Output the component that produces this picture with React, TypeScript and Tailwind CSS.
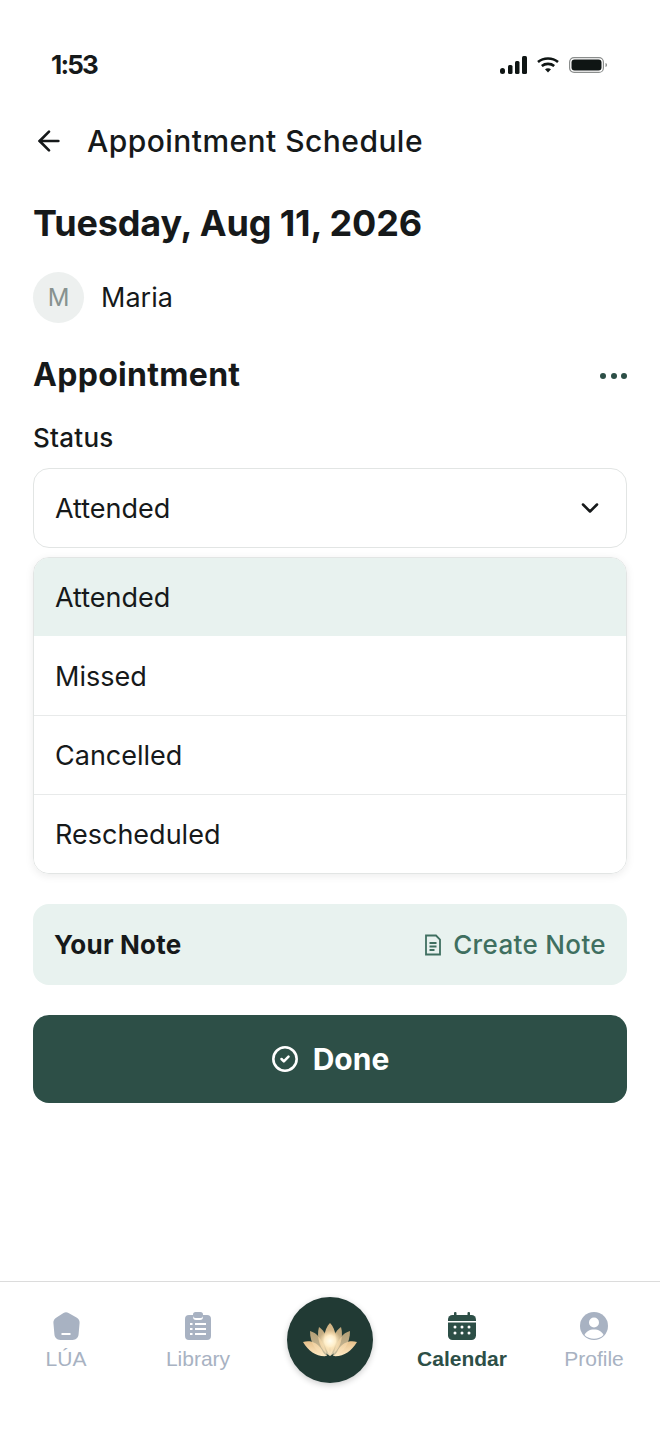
import React from 'react';
import { ArrowLeft, ChevronDown, CircleCheck } from 'lucide-react';

const font = { fontFamily: 'Inter, sans-serif' };

const options = ['Attended', 'Missed', 'Cancelled', 'Rescheduled'];

const StatusIcons = () => (
  <div className="flex items-start">
    <svg width="27" height="18" viewBox="0 0 27 18" fill="#0f1514">
      <rect x="0" y="12" width="5" height="6" rx="2.500" />
      <rect x="8" y="9" width="4.500" height="9" rx="1.500" />
      <rect x="15" y="5" width="4.500" height="13" rx="1.500" />
      <rect x="22" y="0" width="5" height="18" rx="1.500" />
    </svg>
    <svg width="22" height="16" viewBox="0 0 22 16" fill="none" stroke="#0f1514" strokeWidth="2.600" className="ml-[10px] mt-[1px]">
      <path d="M1 5C6.500 .3 15.500 .3 21 5" />
      <path d="M4.800 9c3.500-2.800 8.900-2.800 12.400 0" />
      <path d="M8 12.200l3 3.300 3-3.300c-1.800-1.200-4.200-1.200-6 0z" fill="#0f1514" stroke="none" />
    </svg>
    <svg width="39" height="16" viewBox="0 0 39 16" fill="none" className="ml-[10px] mt-[1px]">
      <rect x=".6" y=".6" width="33.800" height="14.800" rx="4.500" stroke="#8a8d8c" strokeWidth="1.200" />
      <rect x="2.500" y="2.500" width="30" height="11" rx="3" fill="#0f1514" />
      <path d="M36.500 6c1 .4 1.500 1 1.500 2s-.5 1.600-1.500 2z" fill="#8a8d8c" />
    </svg>
  </div>
);

const Lotus = () => (
  <svg width="56" height="34" viewBox="0 0 56 34">
    <defs>
      <linearGradient id="petal" x1="0" y1="0" x2="0" y2="1">
        <stop offset="0" stopColor="#e6c08a" />
        <stop offset="1" stopColor="#ffeac4" />
      </linearGradient>
      <radialGradient id="glow">
        <stop offset="0" stopColor="#fffdf0" />
        <stop offset=".5" stopColor="#ffeec9" />
        <stop offset="1" stopColor="#f8d8a2" stopOpacity="0" />
      </radialGradient>
    </defs>
    <path d="M1 19c7-2 14 0 19 8 1 3 3 5 5 6-10 1-18-4-24-14z" fill="url(#petal)" />
    <path d="M55 19c-7-2-14 0-19 8-1 3-3 5-5 6 10 1 18-4 24-14z" fill="url(#petal)" />
    <path d="M8 8c7 2 13 8 17 25C14 30 8 20 8 8z" fill="url(#petal)" opacity=".75" />
    <path d="M48 8c-7 2-13 8-17 25 11-3 17-13 17-25z" fill="url(#petal)" opacity=".75" />
    <path d="M17 4c6 4 10 12 11 29C18 28 14 14 17 4z" fill="url(#petal)" opacity=".8" />
    <path d="M39 4c-6 4-10 12-11 29 10-5 14-19 11-29z" fill="url(#petal)" opacity=".8" />
    <path d="M28 0c6 6 9 20 0 33C19 20 22 6 28 0z" fill="url(#petal)" opacity=".9" />
    <circle cx="28" cy="18" r="11" fill="url(#glow)" />
  </svg>
);

const NavItem = ({ label, active, children }: { label: string; active?: boolean; children: React.ReactNode }) => (
  <div className="flex w-[132px] flex-col items-center">
    {children}
    <span
      className={`mt-[6px] text-[21px] leading-[26px] ${active ? 'font-bold text-[#2d4f47]' : 'text-[#a8b2c2]'}`}
      style={{ fontFamily: '"Liberation Sans", sans-serif' }}
    >
      {label}
    </span>
  </div>
);

export default function App() {
  return (
    <div className="flex h-[1434px] w-[660px] flex-col bg-white text-[#16191a]" style={font}>
      <div className="flex h-[100px] items-start justify-between pl-[51px] pr-[52px] pt-[50px]">
        <span className="text-[26px] font-bold leading-[30px] tracking-[-1.8px]">1:53</span>
        <div className="pt-[6px]">
          <StatusIcons />
        </div>
      </div>

      <div className="flex h-[82px] items-center px-[33px]">
        <ArrowLeft size={32} strokeWidth={2} />
        <span className="ml-[22px] text-[30px] font-medium tracking-[0.45px]">Appointment Schedule</span>
      </div>

      <div className="px-[33px]">
        <h1 className="mt-[19px] text-[36px] font-bold leading-[44px] tracking-[-0.15px]">Tuesday, Aug 11, 2026</h1>

        <div className="mt-[27px] flex items-center gap-[17px]">
          <div className="flex h-[51px] w-[51px] items-center justify-center rounded-full bg-[#edf0ef] text-[24px] text-[#87928f]">
            M
          </div>
          <span className="pt-[2px] text-[27px]">Maria</span>
        </div>

        <div className="mt-[29px] flex items-center justify-between">
          <h2 className="text-[32px] font-bold leading-[46px] tracking-[0.3px]">Appointment</h2>
          <div className="flex gap-[4.5px] pt-[2px]">
            <span className="h-[6px] w-[6px] rounded-full bg-[#2d4f47]" />
            <span className="h-[6px] w-[6px] rounded-full bg-[#2d4f47]" />
            <span className="h-[6px] w-[6px] rounded-full bg-[#2d4f47]" />
          </div>
        </div>

        <div className="mt-[22px] text-[26px] font-medium leading-[36px] tracking-[0.25px]">Status</div>

        <div className="mt-[12px] flex h-[80px] items-center justify-between rounded-[16px] border border-[#e2e5e4] pl-[21px] pr-[22px]">
          <span className="pt-[2px] text-[27px]">Attended</span>
          <ChevronDown size={28} strokeWidth={2.2} />
        </div>

        <div className="mt-[9px] overflow-hidden rounded-[16px] border border-[#e2e5e4] shadow-[0_2px_8px_rgba(0,0,0,0.08)]">
          {options.map((o, i) => (
            <div
              key={o}
              className={`flex items-center px-[21px] pt-[2px] text-[27px] ${i === 0 ? 'h-[78px] bg-[#e8f2ef]' : 'h-[79px] border-t bg-white'} ${i === 1 ? 'border-transparent' : 'border-[#e8eaea]'}`}
            >
              {o}
            </div>
          ))}
        </div>

        <div className="mt-[30px] flex h-[81px] items-center justify-between rounded-[16px] bg-[#e8f2ef] pl-[21px] pr-[21px]">
          <span className="text-[26px] font-bold tracking-[0.2px]">Your Note</span>
          <div className="flex items-center gap-[11px] text-[#3f6f60]">
            <svg width="18" height="22" viewBox="0 0 18 22" fill="none" stroke="#3f6f60" strokeWidth="1.800">
              <path d="M2 1.500h10l4 4v15H2z" />
              <path d="M5.500 9h7M5.500 12.500h7M5.500 16h5" />
            </svg>
            <span className="text-[26px] font-medium tracking-[0.35px]">Create Note</span>
          </div>
        </div>

        <div className="mt-[30px] flex h-[88px] items-center justify-center gap-[14px] rounded-[16px] bg-[#2d4f47] text-white">
          <CircleCheck size={28} strokeWidth={2.2} />
          <span className="text-[30px] font-bold">Done</span>
        </div>
      </div>

      <div className="mt-auto flex h-[153px] items-start justify-between border-t border-[#dcdcdc] pt-[30px]">
        <NavItem label="LÚA">
          <svg width="28" height="28" viewBox="0 0 28 28" fill="#a8b2c2">
            <path d="M11.500 1c1.600-.9 3.400-.9 5 0l8 4.500c2 1 3.300 3 3.100 5.300l-1 11.500c-.3 3.300-2.500 5.700-6 5.700H8.400c-3.500 0-5.700-2.400-6-5.700l-1-11.500C1.200 8.500 2.500 6.500 4.500 5.500z" />
            <rect x="9.500" y="21" width="9" height="2" fill="#fff" />
          </svg>
        </NavItem>
        <NavItem label="Library">
          <svg width="26" height="28" viewBox="0 0 26 28" fill="#a8b2c2">
            <path d="M4 3h4v2a3 3 0 0 0 3 3h4a3 3 0 0 0 3-3V3h4a4 4 0 0 1 4 4v17a4 4 0 0 1-4 4H4a4 4 0 0 1-4-4V7a4 4 0 0 1 4-4z" />
            <rect x="8" y="0" width="10" height="6" rx="2.500" />
            <g fill="#fff">
              <rect x="5" y="11" width="2.500" height="2" />
              <rect x="10" y="11" width="11" height="2" />
              <rect x="5" y="16" width="2.500" height="2" />
              <rect x="10" y="16" width="11" height="2" />
              <rect x="5" y="21" width="2.500" height="2" />
              <rect x="10" y="21" width="11" height="2" />
            </g>
          </svg>
        </NavItem>
        <div className="-mt-[15px] flex w-[132px] justify-center">
          <div className="flex h-[86px] w-[86px] items-center justify-center rounded-full bg-[#213a34] shadow-[0_2px_6px_rgba(0,0,0,0.2)]">
            <Lotus />
          </div>
        </div>
        <NavItem label="Calendar" active>
          <svg width="28" height="28" viewBox="0 0 28 28" fill="#2d4f47">
            <rect x="6" y="0" width="2.500" height="5" rx="1" />
            <rect x="19.500" y="0" width="2.500" height="5" rx="1" />
            <path d="M4.500 3h19A4.500 4.500 0 0 1 28 7.500V9H0V7.500A4.500 4.500 0 0 1 4.500 3z" />
            <path d="M0 10.500h28v13a4.500 4.500 0 0 1-4.500 4.500h-19A4.500 4.500 0 0 1 0 23.500z" />
            <g fill="#fff">
              <circle cx="7" cy="15" r="1.500" />
              <circle cx="14" cy="15" r="1.500" />
              <circle cx="21" cy="15" r="1.500" />
              <circle cx="7" cy="21" r="1.500" />
              <circle cx="14" cy="21" r="1.500" />
              <circle cx="21" cy="21" r="1.500" />
            </g>
          </svg>
        </NavItem>
        <NavItem label="Profile">
          <svg width="28" height="28" viewBox="0 0 28 28">
            <circle cx="14" cy="14" r="14" fill="#a8b2c2" />
            <circle cx="14" cy="10.500" r="5" fill="#fff" />
            <path d="M4.500 23c1.500-3.500 5-5.500 9.500-5.500s8 2 9.500 5.500c-2.500 2.500-5.800 3.800-9.500 3.800S7 25.500 4.500 23z" fill="#fff" />
          </svg>
        </NavItem>
      </div>
    </div>
  );
}
